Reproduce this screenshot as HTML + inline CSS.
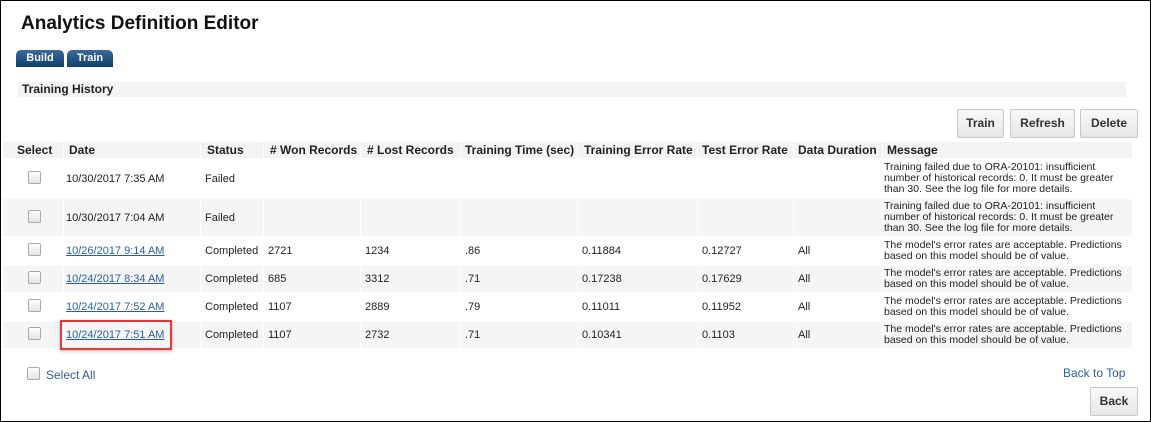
<!DOCTYPE html>
<html><head><style>
body{margin:0;width:1151px;height:422px;overflow:hidden;font-family:"Liberation Sans",Arial,sans-serif;background:#fff}
.frame{position:absolute;left:0;top:0;width:1149px;height:420px;border:1px solid #000}
.a{position:absolute}
h1{position:absolute;left:21px;top:13px;margin:0;font-size:19px;font-weight:bold;color:#111}
.tab{position:absolute;top:50px;height:17px;background:linear-gradient(#3b6a9a,#123e6b);color:#fff;font-weight:bold;font-size:11px;line-height:17px;text-align:center;border-radius:5px 5px 0 0}
.sec{position:absolute;left:18px;top:82px;width:1104px;height:15px;background:#f2f3f5;font-size:12px;font-weight:bold;line-height:15px;padding-left:4px;color:#222}
.btn{position:absolute;top:109px;height:27px;background:linear-gradient(#f9f9f9,#e6e6e6);border:1px solid #c8c8c8;border-radius:2px;font-size:12px;font-weight:bold;line-height:27px;text-align:center;color:#333}
table{position:absolute;left:2px;top:140px;width:1131px;border-collapse:separate;border-spacing:1px 2px;table-layout:fixed;font-size:11px;color:#222}
th{background:#f2f3f5;font-size:12px;font-weight:bold;text-align:left;height:16px;padding:0 4px;white-space:nowrap;color:#222;overflow:hidden}
td{padding:0 4px;white-space:nowrap;vertical-align:middle;overflow:hidden}
tr.g td{background:#f5f5f5}
td.m{white-space:normal;font-size:10.5px;line-height:11px;padding-left:1px}
.cb{display:inline-block;width:11px;height:11px;border:1px solid #aaa;border-radius:2px;background:linear-gradient(#fff,#e3e3e3)}
a{color:#2a5f9e;text-decoration:underline}
</style></head><body>
<div class="frame"></div>
<h1>Analytics Definition Editor</h1>
<div class="tab" style="left:16px;width:48px">Build</div>
<div class="tab" style="left:67px;width:46px">Train</div>
<div class="sec">Training History</div>
<div class="btn" style="left:957px;width:45px">Train</div>
<div class="btn" style="left:1010px;width:63px">Refresh</div>
<div class="btn" style="left:1080px;width:56px">Delete</div>
<table>
<colgroup><col style="width:60px"><col style="width:136px"><col style="width:62px"><col style="width:96px"><col style="width:99px"><col style="width:116px"><col style="width:119px"><col style="width:95px"><col style="width:88px"><col style="width:249px"></colgroup>
<tr><th style="padding-left:14px">Select</th><th style="padding-left:5px">Date</th><th style="padding-left:6px">Status</th><th style="padding-left:6px">#&nbsp;Won Records</th><th style="padding-left:6px"># Lost Records</th><th>Training Time (sec)</th><th style="padding-left:6px">Training Error Rate</th><th>Test Error Rate</th><th>Data Duration</th><th style="padding-left:4px">Message</th></tr>
<tr style="height:37px"><td style="padding-left:25px"><span class="cb"></span></td><td style="padding-left:2px">10/30/2017 7:35 AM</td><td>Failed</td><td></td><td></td><td></td><td></td><td></td><td></td><td class="m">Training failed due to ORA-20101: insufficient number of historical records: 0. It must be greater than 30. See the log file for more details.</td></tr>
<tr class="g" style="height:37px"><td style="padding-left:25px"><span class="cb"></span></td><td style="padding-left:2px">10/30/2017 7:04 AM</td><td>Failed</td><td></td><td></td><td></td><td></td><td></td><td></td><td class="m">Training failed due to ORA-20101: insufficient number of historical records: 0. It must be greater than 30. See the log file for more details.</td></tr>
<tr style="height:26px"><td style="padding-left:25px"><span class="cb"></span></td><td style="padding-left:2px"><a>10/26/2017 9:14 AM</a></td><td>Completed</td><td>2721</td><td>1234</td><td>.86</td><td>0.11884</td><td>0.12727</td><td>All</td><td class="m">The model's error rates are acceptable. Predictions based on this model should be of value.</td></tr>
<tr class="g" style="height:26px"><td style="padding-left:25px"><span class="cb"></span></td><td style="padding-left:2px"><a>10/24/2017 8:34 AM</a></td><td>Completed</td><td>685</td><td>3312</td><td>.71</td><td>0.17238</td><td>0.17629</td><td>All</td><td class="m">The model's error rates are acceptable. Predictions based on this model should be of value.</td></tr>
<tr style="height:26px"><td style="padding-left:25px"><span class="cb"></span></td><td style="padding-left:2px"><a>10/24/2017 7:52 AM</a></td><td>Completed</td><td>1107</td><td>2889</td><td>.79</td><td>0.11011</td><td>0.11952</td><td>All</td><td class="m">The model's error rates are acceptable. Predictions based on this model should be of value.</td></tr>
<tr class="g" style="height:26px"><td style="padding-left:25px"><span class="cb"></span></td><td style="padding-left:2px"><a>10/24/2017 7:51 AM</a></td><td>Completed</td><td>1107</td><td>2732</td><td>.71</td><td>0.10341</td><td>0.1103</td><td>All</td><td class="m">The model's error rates are acceptable. Predictions based on this model should be of value.</td></tr>
</table>
<div class="a" style="left:60px;top:320px;width:108px;height:26px;border:2px solid #e03a3a;box-shadow:0 1px 3px rgba(0,0,0,.3)"></div>
<span class="cb a" style="left:27px;top:367px"></span>
<div class="a" style="left:46px;top:368px;font-size:12px;color:#2a5f9e">Select All</div>
<div class="a" style="left:1063px;top:366px;font-size:12px;color:#2a5f9e">Back to Top</div>
<div class="btn" style="left:1090px;top:387px;width:46px">Back</div>
</body></html>
